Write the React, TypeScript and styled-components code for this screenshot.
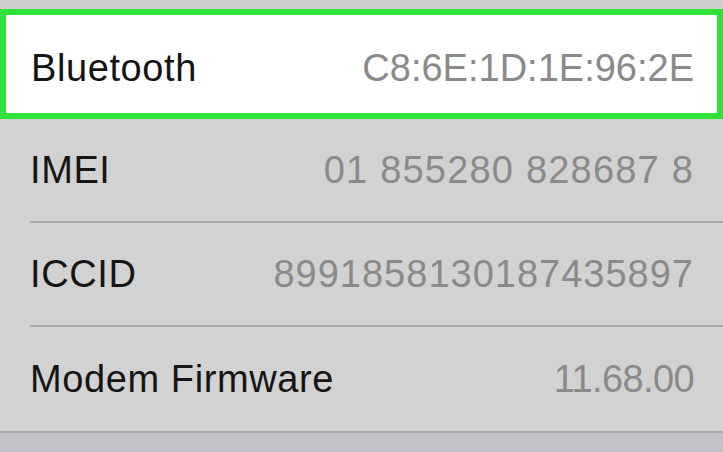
import styled, { createGlobalStyle } from 'styled-components';

const GlobalStyle = createGlobalStyle`
  html, body {
    margin: 0;
    padding: 0;
    background: #c2c1c7;
  }
  body {
    font-family: "Liberation Sans", Arial, sans-serif;
  }
`;

const Screen = styled.div`
  width: 723px;
  height: 452px;
  overflow: hidden;
  display: flex;
  flex-direction: column;
  padding-top: 9px;
  box-sizing: border-box;
  background: linear-gradient(#cfcfcf 0 9px, #c2c1c7 9px);
`;

const List = styled.div`
  display: flex;
  flex-direction: column;
  background: #d2d2d2;
  border-bottom: 2px solid #a9a9ab;
`;

const Row = styled.div<{ $highlighted?: boolean; $last?: boolean }>`
  display: flex;
  align-items: center;
  justify-content: space-between;
  box-sizing: border-box;
  height: ${({ $highlighted }) => ($highlighted ? '110px' : '104px')};
  padding: ${({ $highlighted }) => ($highlighted ? '9px 23px 0 25px' : '0 29px 0 0')};
  margin-left: ${({ $highlighted }) => ($highlighted ? '0' : '30px')};
  background: ${({ $highlighted }) => ($highlighted ? '#ffffff' : 'transparent')};
  border: ${({ $highlighted }) => ($highlighted ? '6px solid #2fe23a' : 'none')};
  border-bottom: ${({ $highlighted, $last }) =>
    $highlighted ? '6px solid #2fe23a' : $last ? 'none' : '2px solid #ababab'};
`;

const Label = styled.span`
  font-size: 38px;
  letter-spacing: 0.6px;
  color: #151515;
`;

const Value = styled.span<{ $tracking: number }>`
  font-size: 38px;
  letter-spacing: ${({ $tracking }) => $tracking}px;
  color: #8a8a8a;
`;

const rows = [
  { label: 'Bluetooth', value: 'C8:6E:1D:1E:96:2E', tracking: 0 },
  { label: 'IMEI', value: '01 855280 828687 8', tracking: 1.2 },
  { label: 'ICCID', value: '8991858130187435897', tracking: 1 },
  { label: 'Modem Firmware', value: '11.68.00', tracking: -0.6 },
];

const App = () => (
  <>
    <GlobalStyle />
    <Screen>
      <List>
        {rows.map((row, i) => (
          <Row key={row.label} $highlighted={i === 0} $last={i === rows.length - 1}>
            <Label>{row.label}</Label>
            <Value $tracking={row.tracking}>{row.value}</Value>
          </Row>
        ))}
      </List>
    </Screen>
  </>
);

export default App;
